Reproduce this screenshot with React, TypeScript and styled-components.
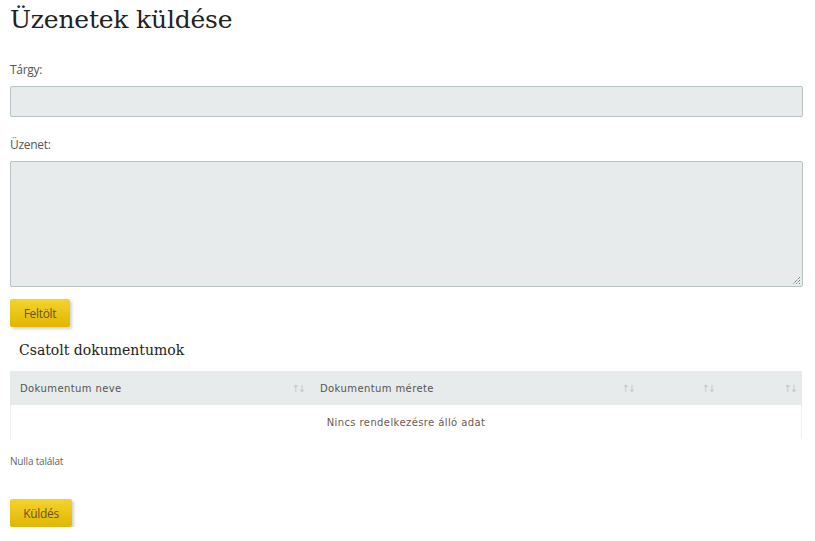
import styled, { createGlobalStyle } from 'styled-components';

const GlobalStyle = createGlobalStyle`
  body {
    margin: 0;
    background: #fff;
    font-family: "Open Sans", "Liberation Sans", sans-serif;
    color: #444;
  }
  * { box-sizing: border-box; }
`;

const Page = styled.div`
  display: flex;
  flex-direction: column;
  padding: 0 12px 0 10px;
  width: 815px;
`;

const Title = styled.h1`
  margin: 2px 0 0;
  font-family: "DejaVu Serif", "Liberation Serif", serif;
  font-weight: 400;
  font-size: 25px;
  line-height: 36px;
  color: #222;
  letter-spacing: -0.2px;
`;

const Field = styled.div<{ $top: number }>`
  display: flex;
  flex-direction: column;
  gap: 8px;
  margin-top: ${(p) => p.$top}px;
`;

const Label = styled.label`
  font-size: 12px;
  line-height: 16px;
  color: #555;
  letter-spacing: -0.3px;
`;

const Input = styled.div`
  height: 31px;
  background: #e8ebeb;
  border: 1px solid #b9c3c3;
  border-radius: 2px;
`;

const TextArea = styled.div`
  position: relative;
  height: 126px;
  background: #e8ebeb;
  border: 1px solid #b9c3c3;
  border-radius: 2px;
`;

const Grip = styled.svg`
  position: absolute;
  right: 1px;
  bottom: 1px;
`;

const ButtonRow = styled.div<{ $top: number }>`
  margin-top: ${(p) => p.$top}px;
`;

const Button = styled.button<{ $width: number }>`
  width: ${(p) => p.$width}px;
  height: 28px;
  border: none;
  border-radius: 2px;
  background: linear-gradient(#f4d42c, #e0b600);
  box-shadow: 2px 2px 3px rgba(0, 0, 0, 0.18);
  font-family: "Open Sans", "Liberation Sans", sans-serif;
  font-size: 12px;
  color: #6b5320;
  letter-spacing: -0.3px;
  padding: 0;
`;

const SubTitle = styled.h2`
  margin: 13px 0 0 9px;
  font-family: "DejaVu Serif", "Liberation Serif", serif;
  font-weight: 400;
  font-size: 14px;
  line-height: 20px;
  color: #222;
`;

const Table = styled.div`
  margin-top: 11px;
  width: 792px;
  display: flex;
  flex-direction: column;
`;

const HeadRow = styled.div`
  display: grid;
  grid-template-columns: 300px 330px 80px 82px;
  height: 34px;
  background: #e8ebeb;
`;

const HeadCell = styled.div`
  display: flex;
  align-items: center;
  justify-content: space-between;
  padding: 0 6px 0 10px;
  font-family: "DejaVu Sans", "Liberation Sans", sans-serif;
  font-size: 10px;
  color: #555;
  letter-spacing: 0.4px;
`;

const SortIcon = styled.span`
  font-size: 10px;
  color: #c2c7c7;
  letter-spacing: -2px;
`;

const EmptyRow = styled.div`
  height: 34px;
  display: flex;
  align-items: center;
  justify-content: center;
  border-left: 1px solid #eef0f0;
  border-right: 1px solid #eef0f0;
  font-family: "DejaVu Sans", "Liberation Sans", sans-serif;
  font-size: 10px;
  color: #6d584e;
  letter-spacing: 0.4px;
`;

const Info = styled.div`
  margin-top: 16px;
  font-size: 10px;
  line-height: 12px;
  color: #666;
  letter-spacing: -0.2px;
`;

const columns = ['Dokumentum neve', 'Dokumentum mérete', '', ''];

export default function App() {
  return (
    <>
      <GlobalStyle />
      <Page>
        <Title>Üzenetek küldése</Title>
        <Field $top={24}>
          <Label>Tárgy:</Label>
          <Input />
        </Field>
        <Field $top={20}>
          <Label>Üzenet:</Label>
          <TextArea>
            <Grip width="10" height="10" viewBox="0 0 10 10">
              <path d="M9 2 L2 9 M9 5 L5 9 M9 8 L8 9" stroke="#555" strokeWidth="1" strokeDasharray="1 1" />
            </Grip>
          </TextArea>
        </Field>
        <ButtonRow $top={12}>
          <Button $width={60}>Feltölt</Button>
        </ButtonRow>
        <SubTitle>Csatolt dokumentumok</SubTitle>
        <Table>
          <HeadRow>
            {columns.map((c, i) => (
              <HeadCell key={i}>
                <span>{c}</span>
                <SortIcon>↑↓</SortIcon>
              </HeadCell>
            ))}
          </HeadRow>
          <EmptyRow>Nincs rendelkezésre álló adat</EmptyRow>
        </Table>
        <Info>Nulla találat</Info>
        <ButtonRow $top={32}>
          <Button $width={62}>Küldés</Button>
        </ButtonRow>
      </Page>
    </>
  );
}
